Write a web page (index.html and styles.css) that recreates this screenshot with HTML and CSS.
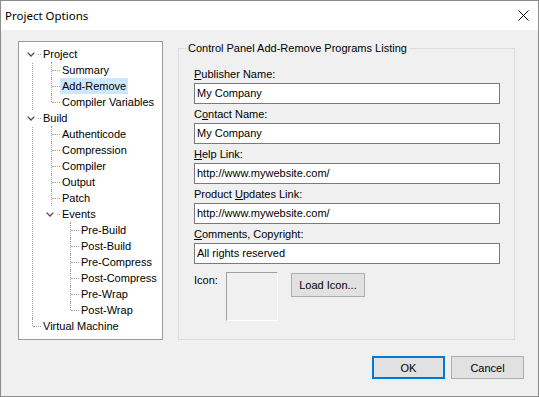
FILE: index.html
```html
<!DOCTYPE html>
<html>
<head>
<meta charset="utf-8">
<link rel="stylesheet" href="styles.css">
</head>
<body>
<div class="window">
  <div class="titlebar">
    <span class="title">Project Options</span>
    <svg class="close" width="11" height="11" viewBox="0 0 11 11"><path d="M0.5 0.5 L10.5 10.5 M10.5 0.5 L0.5 10.5" stroke="#000" stroke-width="1" fill="none"/></svg>
  </div>
  <div class="content">
    <div class="main">
      <div class="tree">
        <ul class="lvl root">
          <li>
            <div class="row"><span class="exp"><svg width="8" height="5" viewBox="0 0 8 5"><path d="M0.6 0.6 L4 4 L7.4 0.6" stroke="#4a4a4a" stroke-width="1.3" fill="none"/></svg></span><span class="txt">Project</span></div>
            <ul class="lvl">
              <li><div class="row"><span class="txt">Summary</span></div></li>
              <li><div class="row"><span class="txt sel">Add-Remove</span></div></li>
              <li><div class="row"><span class="txt">Compiler Variables</span></div></li>
            </ul>
          </li>
          <li>
            <div class="row"><span class="exp"><svg width="8" height="5" viewBox="0 0 8 5"><path d="M0.6 0.6 L4 4 L7.4 0.6" stroke="#4a4a4a" stroke-width="1.3" fill="none"/></svg></span><span class="txt">Build</span></div>
            <ul class="lvl">
              <li><div class="row"><span class="txt">Authenticode</span></div></li>
              <li><div class="row"><span class="txt">Compression</span></div></li>
              <li><div class="row"><span class="txt">Compiler</span></div></li>
              <li><div class="row"><span class="txt">Output</span></div></li>
              <li><div class="row"><span class="txt">Patch</span></div></li>
              <li>
                <div class="row"><span class="exp"><svg width="8" height="5" viewBox="0 0 8 5"><path d="M0.6 0.6 L4 4 L7.4 0.6" stroke="#4a4a4a" stroke-width="1.3" fill="none"/></svg></span><span class="txt">Events</span></div>
                <ul class="lvl">
                  <li><div class="row"><span class="txt">Pre-Build</span></div></li>
                  <li><div class="row"><span class="txt">Post-Build</span></div></li>
                  <li><div class="row"><span class="txt">Pre-Compress</span></div></li>
                  <li><div class="row"><span class="txt">Post-Compress</span></div></li>
                  <li><div class="row"><span class="txt">Pre-Wrap</span></div></li>
                  <li><div class="row"><span class="txt">Post-Wrap</span></div></li>
                </ul>
              </li>
            </ul>
          </li>
          <li><div class="row"><span class="txt">Virtual Machine</span></div></li>
        </ul>
      </div>
      <fieldset class="group">
        <legend>Control Panel Add-Remove Programs Listing</legend>
        <div class="field first">
          <div class="label"><u>P</u>ublisher Name:</div>
          <div class="input">My Company</div>
        </div>
        <div class="field">
          <div class="label">C<u>o</u>ntact Name:</div>
          <div class="input">My Company</div>
        </div>
        <div class="field">
          <div class="label"><u>H</u>elp Link:</div>
          <div class="input">http://www.mywebsite.com/</div>
        </div>
        <div class="field">
          <div class="label">Product <u>U</u>pdates Link:</div>
          <div class="input">http://www.mywebsite.com/</div>
        </div>
        <div class="field">
          <div class="label"><u>C</u>omments, Copyright:</div>
          <div class="input">All rights reserved</div>
        </div>
        <div class="icon-row">
          <span class="icon-label">Icon:</span>
          <div class="iconbox"></div>
          <div class="btn load">Load Icon...</div>
        </div>
      </fieldset>
    </div>
    <div class="footer">
      <div class="btn default">OK</div>
      <div class="btn">Cancel</div>
    </div>
  </div>
</div>
</body>
</html>
```
FILE: styles.css
```css
html, body {
  margin: 0;
  padding: 0;
  background: #f0f0f0;
}
.window {
  width: 539px;
  height: 397px;
  box-sizing: border-box;
  border: 1px solid #8c8c8c;
  background: #f0f0f0;
  font-family: "Liberation Sans", Arial, sans-serif;
  font-size: 11px;
  color: #000;
  overflow: hidden;
}
.titlebar {
  height: 29px;
  background: #fff;
  display: flex;
  align-items: center;
  justify-content: space-between;
  padding: 0 9px 0 4px;
}
.title {
  font-family: "Noto Sans", sans-serif;
  font-size: 11.5px;
  color: #000;
}
.close {
  display: block;
}
.content {
  padding: 11px 14px 0 17px;
}
.main {
  display: grid;
  grid-template-columns: 145px 337px;
  column-gap: 15px;
  height: 299px;
}
.tree {
  box-sizing: border-box;
  height: 299px;
  border: 1px solid #9a9a9a;
  background: #fff;
  padding-top: 4px;
}
.lvl {
  list-style: none;
  margin: 0;
  padding: 0;
}
.lvl .lvl {
  padding-left: 19px;
}
.lvl li {
  position: relative;
}
.lvl li::before {
  content: "";
  position: absolute;
  left: 13px;
  top: 0;
  bottom: 0;
  border-left: 1px dotted #a0a0a0;
}
.lvl li:last-child::before {
  bottom: auto;
  height: 8px;
}
.root > li:first-child::before {
  top: 8px;
}
.row {
  position: relative;
  height: 16px;
  line-height: 16px;
  padding-left: 24px;
  white-space: nowrap;
}
.row::before {
  content: "";
  position: absolute;
  left: 14px;
  top: 8px;
  width: 8px;
  border-top: 1px dotted #a0a0a0;
}
.exp {
  position: absolute;
  left: 5px;
  top: 0;
  width: 14px;
  height: 16px;
  background: #fff;
  display: flex;
  align-items: center;
  justify-content: flex-start;
  padding-left: 3px;
  box-sizing: border-box;
  z-index: 1;
}
.exp svg {
  display: block;
}
.txt {
  position: relative;
  display: inline-block;
  height: 16px;
  padding: 0 2px;
  margin-left: -2px;
  background: #fff;
}
.txt.sel {
  background: #cce8ff;
}
.group {
  margin: 0;
  border: 1px solid #dcdcdc;
  padding: 0 14px 0 15px;
  min-width: 0;
}
.group legend {
  padding: 0 2px;
  margin-left: -8px;
  line-height: 14px;
  height: 14px;
}
.field {
  margin-bottom: 3px;
}
.field.first {
  margin-top: 12px;
}
.label {
  height: 14px;
  line-height: 14px;
  margin-bottom: 2px;
}
.label u {
  text-decoration: underline;
}
.input {
  box-sizing: border-box;
  height: 21px;
  line-height: 19px;
  border: 1px solid #7a7a7a;
  background: #fff;
  padding: 0 2px;
  white-space: nowrap;
}
.icon-row {
  display: flex;
  align-items: flex-start;
  margin-top: 8px;
}
.icon-label {
  width: 32px;
  line-height: 14px;
  padding-top: 1px;
}
.iconbox {
  box-sizing: border-box;
  width: 52px;
  height: 49px;
  border-top: 1px solid #a0a0a0;
  border-left: 1px solid #a0a0a0;
  border-right: 1px solid #fff;
  border-bottom: 1px solid #fff;
}
.btn {
  box-sizing: border-box;
  height: 23px;
  border: 1px solid #adadad;
  background: #e1e1e1;
  display: flex;
  align-items: center;
  justify-content: center;
  white-space: nowrap;
}
.btn.load {
  width: 74px;
  height: 24px;
  margin-left: 13px;
  margin-top: 1px;
}
.footer {
  display: flex;
  justify-content: flex-end;
  gap: 6px;
  margin-top: 16px;
}
.footer .btn {
  width: 73px;
}
.btn.default {
  border: 2px solid #0078d7;
}
```
